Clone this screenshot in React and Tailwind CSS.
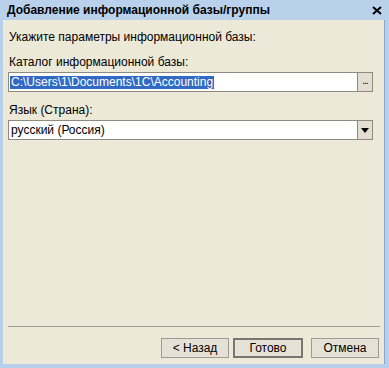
import React from "react";

const font = { fontFamily: '"Liberation Sans", Arial, sans-serif' };

const Button = ({ children, primary }) => (
  <button
    type="button"
    className={
      primary
        ? "w-[70px] h-[20px] border-2 border-[#77766f] bg-[#e6e1d6] text-[12px] text-black leading-none"
        : "w-[68px] h-[20px] border border-[#9d9b94] bg-[#e6e1d6] text-[12px] text-black leading-none"
    }
  >
    {children}
  </button>
);

export default function App() {
  return (
    <div
      className="w-[389px] h-[368px] flex flex-col bg-[#b7cfea] overflow-hidden"
      style={font}
    >
      {/* Title bar */}
      <div className="h-[20px] flex items-center justify-between pl-[7px] pr-[7px] bg-[#b9d1ea]">
        <span className="text-[12px] font-bold text-black leading-none">
          Добавление информационной базы/группы
        </span>
        <svg width="10" height="9" viewBox="0 0 10 9">
          <path d="M1 1 L9 8 M9 1 L1 8" stroke="#000" strokeWidth="2" />
        </svg>
      </div>

      {/* Body with frame */}
      <div className="flex-1 flex pl-[3px] pr-[4px] pb-[4px]">
        <div className="flex-1 flex flex-col bg-[#ece9d8] border-r border-[#8aa7cc]">
          <div className="flex flex-col pl-[5px] pr-[11px]">
            <div className="mt-[10px] pl-[1px] h-[14px] text-[12px] leading-[14px] text-black">
              Укажите параметры информационной базы:
            </div>
            <div className="mt-[11px] pl-[1px] h-[14px] text-[12px] leading-[14px] text-black">
              Каталог информационной базы:
            </div>
            <div className="mt-[3px] h-[20px] flex border border-[#8e8a7f] bg-white">
              <div className="flex-1 flex items-center pl-[1px]">
                <span className="bg-[#316ac5] text-white text-[12px] leading-[13px] px-[1px]">
                  C:\Users\1\Documents\1C\Accounting
                </span>
              </div>
              <div className="w-[15px] border-l border-[#8e8a7f] bg-[#e3ddd2] flex items-end justify-center pb-[5px]">
                <span className="text-[10px] leading-none text-black tracking-[-1px]">...</span>
              </div>
            </div>
            <div className="mt-[11px] pl-[1px] h-[14px] text-[12px] leading-[14px] text-black">
              Язык (Страна):
            </div>
            <div className="mt-[3px] h-[20px] flex border border-[#8e8a7f] bg-white">
              <div className="flex-1 flex items-center pl-[2px] text-[12px] text-black">
                русский (Россия)
              </div>
              <div className="w-[15px] border-l border-[#8e8a7f] bg-[#e3ddd2] flex items-center justify-center">
                <svg width="8" height="5" viewBox="0 0 8 5">
                  <path d="M0 0 H8 L4 5 Z" fill="#000" />
                </svg>
              </div>
            </div>
          </div>

          <div className="flex-1" />

          <div className="ml-[5px] mr-[4px] border-t border-[#a19e94]" />
          <div className="flex justify-end pr-[5px] mt-[11px] mb-[6px]">
            <Button>&lt; Назад</Button>
            <div className="w-[4px]" />
            <Button primary>Готово</Button>
            <div className="w-[8px]" />
            <Button>Отмена</Button>
          </div>
        </div>
      </div>
    </div>
  );
}
